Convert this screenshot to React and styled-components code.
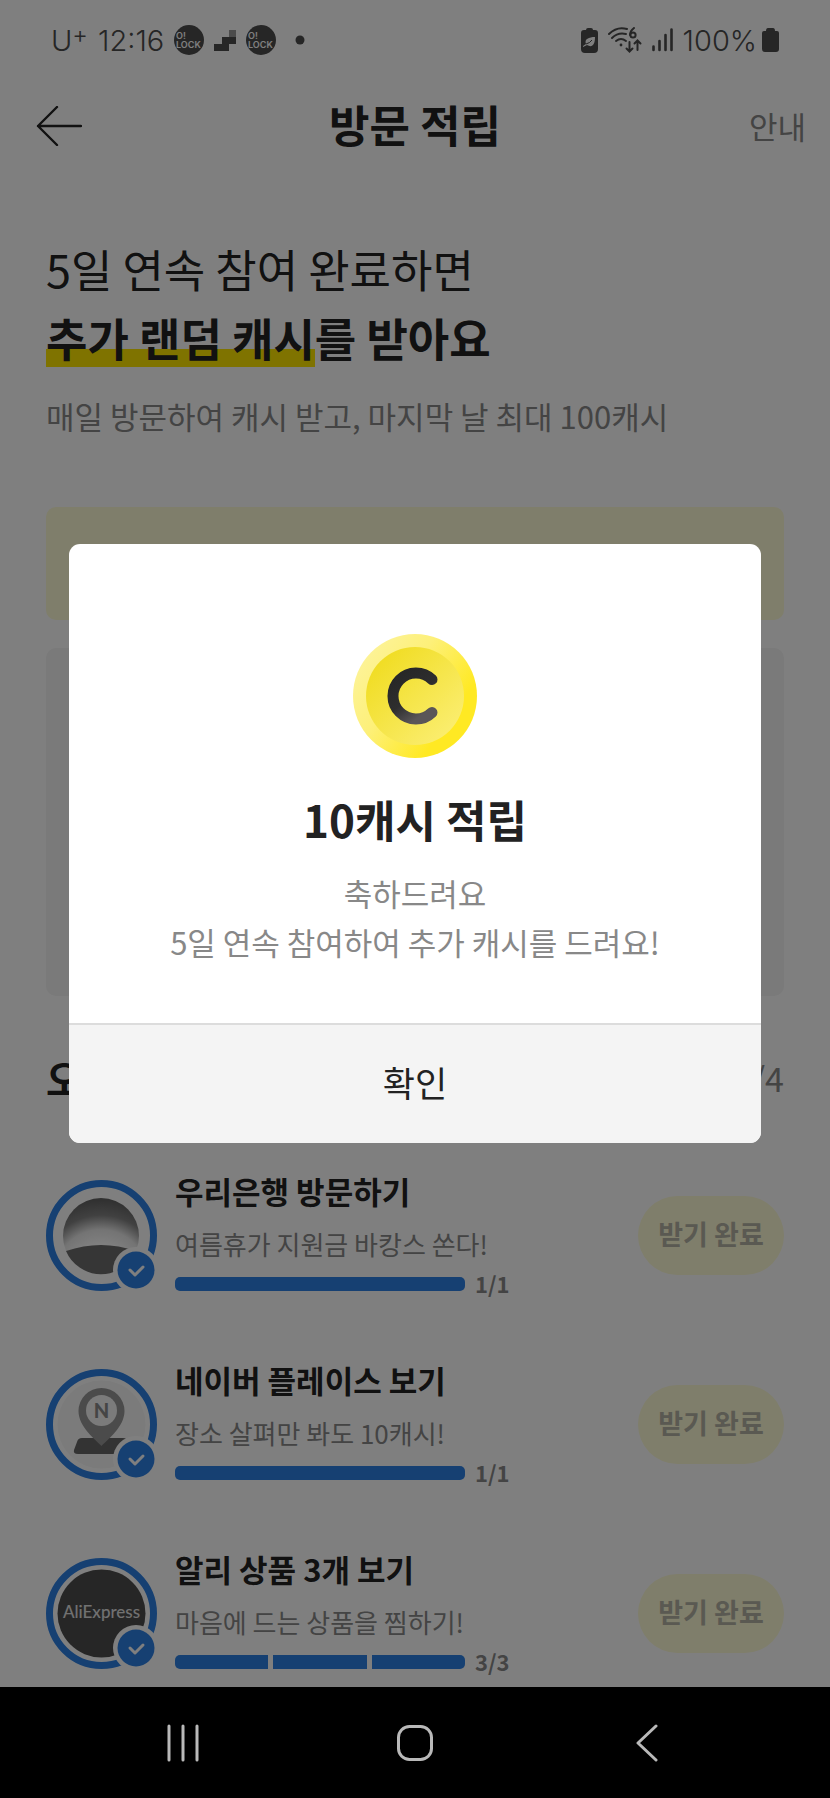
import styled, { createGlobalStyle } from "styled-components"

const GlobalStyle = createGlobalStyle`
    * {
        box-sizing: border-box;
    }
    body {
        margin: 0;
        background-color: #fff;
        font-family: "Noto Sans CJK KR", "Noto Sans", sans-serif;
        color: #222;
    }
    button {
        font-family: inherit;
        border: none;
        padding: 0;
        background: none;
        cursor: pointer;
    }
    h1, h2, h3, p, ul {
        margin: 0;
        padding: 0;
    }
`

const Screen = styled.div`
    min-height: 100vh;
    display: flex;
    flex-direction: column;
`

const Page = styled.main`
    flex: 1;
    position: relative;
    overflow: hidden;
    padding-bottom: 7px;
`

/* status bar */
const StatusBar = styled.div`
    height: 80px;
    padding: 0 51px;
    display: flex;
    align-items: center;
    justify-content: space-between;
    font-family: Inter, Roboto, sans-serif;
    font-size: 29px;
    font-weight: 300;
    color: #4c4c4c;
`

const StatusGroup = styled.div`
    display: flex;
    align-items: center;
    gap: ${props => props.gap};
`

const Carrier = styled.span`
    display: flex;

    sup {
        font-size: 24px;
        line-height: 24px;
    }
`

const BatteryLevel = styled.span`
    display: flex;
    align-items: center;
    gap: 5px;
`

/* header */
const Header = styled.header`
    height: 92px;
    padding: 0 24px;
    display: grid;
    grid-template-columns: 1fr auto 1fr;
    align-items: center;
`

const BackButton = styled.button`
    justify-self: start;
    display: flex;
    padding-left: 12px;
`

const PageTitle = styled.h1`
    font-size: 44px;
    line-height: 60px;
    font-weight: 700;
    padding-bottom: 4px;
`

const GuideLink = styled.a`
    justify-self: end;
    font-size: 31px;
    line-height: 44px;
    color: #888;
    text-decoration: none;
`

/* content */
const Content = styled.div`
    padding: 62px 46px 0;
`

const Headline = styled.h2`
    font-size: 45px;
    line-height: 69px;
    font-weight: ${props => (props.$strong ? 700 : 400)};
`

const Marker = styled.mark`
    color: inherit;
    background: linear-gradient(transparent 68%, #ffe600 68%, #ffe600 96%, transparent 96%);
`

const Lead = styled.p`
    margin-top: 21px;
    font-size: 31px;
    line-height: 46px;
    color: #888;
`

const Panel = styled.div`
    margin-top: ${props => props.$top};
    height: ${props => props.$height};
    border-radius: 10px;
    background-color: ${props => props.$bg};
`

const ListHeader = styled.div`
    margin-top: 52px;
    display: flex;
    align-items: center;
    justify-content: space-between;
    line-height: 60px;
`

const ListTitle = styled.h2`
    font-size: 40px;
    font-weight: 700;
`

const ListCount = styled.span`
    font-size: 34px;
    color: #888;
`

const TaskList = styled.ul`
    margin-top: 62px;
    display: flex;
    flex-direction: column;
    gap: 58px;
    list-style: none;
`

const Task = styled.li`
    display: flex;
    align-items: center;
    gap: 18px;
`

const TaskInfo = styled.div`
    flex: 1;
`

const TaskName = styled.h3`
    font-size: 31px;
    line-height: 42px;
    font-weight: 700;
`

const TaskDesc = styled.p`
    margin-top: 12px;
    font-size: 26px;
    line-height: 40px;
    color: #888;
`

const Progress = styled.div`
    margin-top: 5px;
    margin-bottom: 2px;
    display: flex;
    align-items: center;
    gap: 10px;
    font-size: 22px;
    line-height: 30px;
    font-weight: 700;
    color: #888;

    span {
        padding-bottom: 2px;
        line-height: 28px;
    }
`

const Bar = styled.div`
    width: 290px;
    height: 14px;
    display: flex;
    gap: 5px;
    border-radius: 5px;
    overflow: hidden;
`

const BarStep = styled.div`
    flex: 1;
    background-color: #2d80e4;
`

const ClaimButton = styled.button`
    width: 146px;
    height: 79px;
    border-radius: 40px;
    background-color: #fffcd6;
    color: #b4b3a4;
    font-size: 27px;
    line-height: 40px;
    font-weight: 700;
    padding-bottom: 4px;
`

/* popup */
const Overlay = styled.div`
    position: absolute;
    inset: 0;
    display: flex;
    align-items: center;
    justify-content: center;
    padding: 0 69px;
    background-color: rgba(0, 0, 0, 0.5);
`

const Dialog = styled.div`
    width: 100%;
    border-radius: 11px;
    overflow: hidden;
    background-color: #fff;
    text-align: center;
`

const DialogBody = styled.div`
    padding: 90px 24px 57px;
    display: flex;
    flex-direction: column;
    align-items: center;
`

const DialogTitle = styled.h2`
    margin-top: 31px;
    font-size: 44px;
    line-height: 60px;
    font-weight: 700;
`

const DialogText = styled.p`
    margin-top: 19px;
    font-size: 31px;
    line-height: 49px;
    color: #888;
`

const ConfirmButton = styled.button`
    width: 100%;
    height: 120px;
    border-top: 2px solid #dcdcdc;
    background-color: #f4f4f4;
    color: #222;
    font-size: 35px;
    line-height: 50px;
    padding-bottom: 4px;
`

/* bottom navigation */
const NavBar = styled.nav`
    height: 111px;
    padding: 0 8%;
    display: grid;
    grid-template-columns: repeat(3, 1fr);
    background-color: #000;
`

const NavButton = styled.button`
    display: flex;
    align-items: center;
    justify-content: center;
`

const LockIcon = () => (
    <svg width="30" height="30" viewBox="0 0 30 30" fill="#fff" fontFamily="Inter, sans-serif" fontWeight="600">
        <circle cx="15" cy="15" r="15" fill="#4c4c4c" />
        <text x="2" y="14" fontSize="9">O!</text>
        <text x="2" y="23" fontSize="9">LOCK</text>
    </svg>
)

const StairsIcon = () => (
    <svg width="22" height="21" viewBox="0 0 22 21" fill="#4c4c4c">
        <path d="M15 0h7v7h-7z" fill="#999" />
        <path d="M8 7h14v7h-7v7H0v-7h8z" />
    </svg>
)

const LeafBatteryIcon = () => (
    <svg width="17" height="25" viewBox="0 0 17 25">
        <path d="M5 2q0-2 2-2h3q2 0 2 2h2q3 0 3 3v16q0 4-4 4H4q-4 0-4-4V5q0-3 3-3z" fill="#4c4c4c" />
        <path d="M2 18l3-2c-2-5 3-7 9-7 0 8-3 11-8 8l-4 2z" fill="#fff" />
        <path d="M5 16q4-1 6-4" stroke="#4c4c4c" fill="none" />
    </svg>
)

const WifiIcon = () => (
    <svg width="34" height="26" viewBox="0 0 34 26" fill="none" stroke="#4c4c4c" strokeWidth="2" strokeLinecap="round">
        <path d="M1 7Q9-1 19 2" />
        <path d="M4 11q6-6 14-4" />
        <path d="M8 14q5-4 10 0" />
        <circle cx="13" cy="18" r="1.400" fill="#4c4c4c" stroke="none" />
        <path d="M26 1q-4 3-4 7" />
        <circle cx="25" cy="8" r="2.6" />
        <path d="M21.500 15v9M18.500 21.500l3 3 3-3M29.500 23v-9M26.500 16.500l3-3 3 3" />
    </svg>
)

const SignalIcon = () => (
    <svg width="21" height="24" viewBox="0 0 21 24" stroke="#4c4c4c" strokeWidth="2.6" strokeLinecap="round">
        <path d="M1.500 18.500V22M7.500 13v9M13.500 7v15M19.500 1.500V22" />
    </svg>
)

const BatteryIcon = () => (
    <svg width="17" height="25" viewBox="0 0 17 25">
        <path d="M4 3q0-3 2-3h5q2 0 2 3h2q2 0 2 2v16q0 3-3 3H3q-3 0-3-3V5q0-2 2-2z" fill="#4c4c4c" />
    </svg>
)

const WooriLogo = () => (
    <g>
        <defs>
            <radialGradient id="ball" cx="55" cy="96" r="80" gradientUnits="userSpaceOnUse">
                <stop offset="0.4" stopColor="#fff" />
                <stop offset="0.58" stopColor="#e8e8e8" />
                <stop offset="0.76" stopColor="#828282" />
                <stop offset="0.95" stopColor="#626262" />
            </radialGradient>
        </defs>
        <circle cx="55" cy="56" r="38" fill="url(#ball)" />
        <path d="M20 71Q55 59 90 71A38 38 0 0 1 20 71z" fill="#6c6c6c" />
    </g>
)

const PlaceLogo = () => (
    <g>
        <circle cx="55.5" cy="55.5" r="44" fill="#f6f6f6" />
        <path d="M36 69h41q4 0 5 4l3 8q1 4-3 4H32q-5 0-4-4l3-8q1-4 5-4z" fill="#666" />
        <path d="M55.500 77C50 71 32.500 58 32.500 42a23 23 0 0 1 46 0c0 16-17.500 29-23 35z" fill="#969696" />
        <circle cx="55.5" cy="41.5" r="15.500" fill="#f6f6f6" />
        <text x="55.5" y="49" textAnchor="middle" fontSize="20" fontWeight="900" fontFamily="Lato, sans-serif" fill="#8a8a8a">N</text>
    </g>
)

const AliLogo = () => (
    <g>
        <circle cx="55.5" cy="55.5" r="44" fill="#4c4c4c" />
        <text x="55.5" y="60" textAnchor="middle" fontSize="17" fontWeight="500" fontFamily="Lato, sans-serif" fill="#e2e2e2">AliExpress</text>
    </g>
)

const Avatar = ({ logo: Logo }) => (
    <svg width="111" height="111" viewBox="0 0 111 111">
        <circle cx="55.5" cy="55.5" r="52" fill="#fff" stroke="#2d80e4" strokeWidth="7" />
        <Logo />
        <circle cx="90" cy="90" r="23" fill="#fff" />
        <circle cx="90" cy="90" r="18.500" fill="#2d80e4" />
        <path d="M84 90l5 5 8-8" fill="none" stroke="#fff" strokeWidth="3" strokeLinecap="round" strokeLinejoin="round" />
    </svg>
)

const CoinIcon = () => (
    <svg width="124" height="124" viewBox="0 0 124 124">
        <defs>
            <linearGradient id="rim" x1="0" y1="0.1" x2="1" y2="0.8">
                <stop offset="0" stopColor="#fdf4a0" />
                <stop offset="0.4" stopColor="#fdf07a" />
                <stop offset="0.8" stopColor="#ffe923" />
                <stop offset="1" stopColor="#ffe923" />
            </linearGradient>
            <linearGradient id="face" x1="0.1" y1="0.1" x2="0.9" y2="0.9">
                <stop offset="0" stopColor="#f0dc20" />
                <stop offset="1" stopColor="#fbee72" />
            </linearGradient>
            <linearGradient id="letter" x1="0" y1="0" x2="0.6" y2="1">
                <stop offset="0" stopColor="#262626" />
                <stop offset="0.6" stopColor="#2e2e2e" />
                <stop offset="1" stopColor="#5a5658" />
            </linearGradient>
        </defs>
        <circle cx="62" cy="62" r="62" fill="url(#rim)" />
        <circle cx="62" cy="62" r="49" fill="url(#face)" />
        <path d="M79 45.500a23 23 0 1 0 0 33" fill="none" stroke="url(#letter)" strokeWidth="11" strokeLinecap="round" />
    </svg>
)

const tasks = [
    { name: "우리은행 방문하기", desc: "여름휴가 지원금 바캉스 쏜다!", steps: 1, logo: WooriLogo },
    { name: "네이버 플레이스 보기", desc: "장소 살펴만 봐도 10캐시!", steps: 1, logo: PlaceLogo },
    { name: "알리 상품 3개 보기", desc: "마음에 드는 상품을 찜하기!", steps: 3, logo: AliLogo },
]

const App = () => {
    return (
        <Screen>
            <GlobalStyle />
            <Page>
                <StatusBar>
                    <StatusGroup gap="10px">
                        <Carrier>U<sup>+</sup></Carrier>
                        <span>12:16</span>
                        <LockIcon />
                        <StairsIcon />
                        <LockIcon />
                        <svg width="28" height="10" viewBox="0 0 28 10">
                            <circle cx="14" cy="5" r="4.500" fill="#4c4c4c" />
                        </svg>
                    </StatusGroup>
                    <StatusGroup gap="10px">
                        <LeafBatteryIcon />
                        <WifiIcon />
                        <SignalIcon />
                        <BatteryLevel>
                            100%
                            <BatteryIcon />
                        </BatteryLevel>
                    </StatusGroup>
                </StatusBar>
                <Header>
                    <BackButton aria-label="뒤로">
                        <svg width="46" height="40" viewBox="0 0 46 40" fill="none" stroke="#222" strokeWidth="2.400" strokeLinecap="round" strokeLinejoin="round">
                            <path d="M21 1L2 20l19 19M2 20h43" />
                        </svg>
                    </BackButton>
                    <PageTitle>방문 적립</PageTitle>
                    <GuideLink href="#guide">안내</GuideLink>
                </Header>
                <Content>
                    <Headline>5일 연속 참여 완료하면</Headline>
                    <Headline $strong><Marker>추가 랜덤 캐시</Marker>를 받아요</Headline>
                    <Lead>매일 방문하여 캐시 받고, 마지막 날 최대 100캐시</Lead>
                    <Panel $top="68px" $height="113px" $bg="#fffcd6" />
                    <Panel $top="28px" $height="348px" $bg="#f4f4f4" />
                    <ListHeader>
                        <ListTitle>오늘</ListTitle>
                        <ListCount>4/4</ListCount>
                    </ListHeader>
                    <TaskList>
                        {tasks.map((task) => (
                            <Task key={task.name}>
                                <Avatar logo={task.logo} />
                                <TaskInfo>
                                    <TaskName>{task.name}</TaskName>
                                    <TaskDesc>{task.desc}</TaskDesc>
                                    <Progress>
                                        <Bar>
                                            {Array.from({ length: task.steps }, (_, index) => (
                                                <BarStep key={index} />
                                            ))}
                                        </Bar>
                                        <span>{task.steps}/{task.steps}</span>
                                    </Progress>
                                </TaskInfo>
                                <ClaimButton disabled>받기 완료</ClaimButton>
                            </Task>
                        ))}
                    </TaskList>
                </Content>
                <Overlay>
                    <Dialog role="dialog" aria-modal="true" aria-labelledby="dialog-title">
                        <DialogBody>
                            <CoinIcon />
                            <DialogTitle id="dialog-title">10캐시 적립</DialogTitle>
                            <DialogText>
                                축하드려요<br />
                                5일 연속 참여하여 추가 캐시를 드려요!
                            </DialogText>
                        </DialogBody>
                        <ConfirmButton>확인</ConfirmButton>
                    </Dialog>
                </Overlay>
            </Page>
            <NavBar>
                <NavButton aria-label="최근 앱">
                    <svg width="32" height="38" viewBox="0 0 32 38" stroke="#b9b9b9" strokeWidth="3" strokeLinecap="round">
                        <path d="M2 2v34M16 2v34M30 2v34" />
                    </svg>
                </NavButton>
                <NavButton aria-label="홈">
                    <svg width="36" height="36" viewBox="0 0 36 36" fill="none" stroke="#b9b9b9" strokeWidth="3">
                        <rect x="1.500" y="1.500" width="33" height="33" rx="11" />
                    </svg>
                </NavButton>
                <NavButton aria-label="이전">
                    <svg width="22" height="38" viewBox="0 0 22 38" fill="none" stroke="#b9b9b9" strokeWidth="3" strokeLinecap="round" strokeLinejoin="round">
                        <path d="M20 2L2 19l18 17" />
                    </svg>
                </NavButton>
            </NavBar>
        </Screen>
    )
}

export default App
